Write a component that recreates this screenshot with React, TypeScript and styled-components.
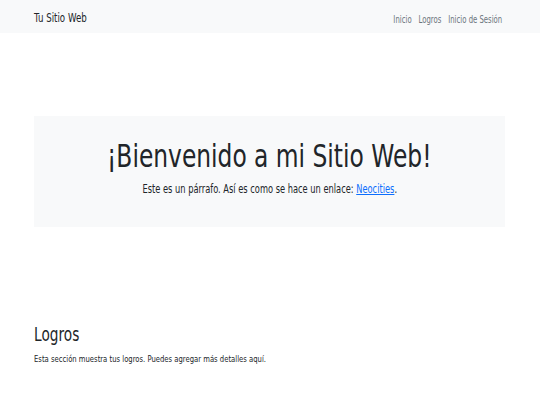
import * as React from 'react';
import styled, {createGlobalStyle} from 'styled-components';

// the reference renders DejaVu Sans squeezed horizontally, so text runs get a scaleX
const SQUEEZE = 0.72;

const Global = createGlobalStyle`
  html, body {
    margin: 0;
    padding: 0;
    background: #ffffff;
    font-family: "DejaVu Sans", sans-serif;
    color: #212529;
  }
`;

const Squeeze = styled.span<{$origin?: string; $scale?: number}>`
  display: inline-block;
  white-space: nowrap;
  transform: scaleX(${({$scale}) => $scale || SQUEEZE});
  transform-origin: ${({$origin}) => $origin || 'left'};
`;

const Navbar = styled.nav`
  height: 33px;
  background: #f8f9fa;
  display: flex;
  align-items: center;
  justify-content: space-between;
  padding: 0 38px 0 34px;
`;

const Brand = styled.a`
  font-size: 12px;
  line-height: 1;
  color: #212529;
  text-decoration: none;
  padding-top: 2px;
`;

const NavLinks = styled.ul`
  list-style: none;
  margin: 0;
  padding: 2px 0 0;
  display: flex;
  gap: 9.5px;
`;

const NavLink = styled.a`
  font-size: 9.6px;
  line-height: 1;
  color: #6c757d;
  text-decoration: none;
`;

const Container = styled.main`
  padding: 83px 35px 0 34px;
`;

const Jumbotron = styled.section`
  background: #f8f9fa;
  height: 111px;
  box-sizing: border-box;
  padding-top: 21px;
  display: flex;
  flex-direction: column;
  align-items: center;
`;

const Title = styled.h1`
  margin: 0;
  font-size: 32px;
  font-weight: 400;
  line-height: 1.2;
`;

const Lead = styled.p`
  margin: 6px 0 0;
  font-size: 11.5px;
  line-height: 1.5;
`;

const Link = styled.a`
  color: #0d6efd;
`;

const Section = styled.section`
  margin-top: 96px;
`;

const Heading = styled.h2`
  margin: 0 0 6px;
  font-size: 19px;
  font-weight: 400;
  line-height: 1.2;
`;

const Text = styled.p`
  margin: 0;
  font-size: 9.4px;
  line-height: 1.5;
`;

export default function App() {
  return (
    <>
      <Global />
      <Navbar>
        <Brand href="#">
          <Squeeze>Tu Sitio Web</Squeeze>
        </Brand>
        <Squeeze $origin="right">
          <NavLinks>
            <li><NavLink href="#">Inicio</NavLink></li>
            <li><NavLink href="#">Logros</NavLink></li>
            <li><NavLink href="#">Inicio de Sesión</NavLink></li>
          </NavLinks>
        </Squeeze>
      </Navbar>
      <Container>
        <Jumbotron>
          <Title>
            <Squeeze $origin="center" $scale={0.73}>¡Bienvenido a mi Sitio Web!</Squeeze>
          </Title>
          <Lead>
            <Squeeze $origin="center">
              Este es un párrafo. Así es como se hace un enlace: <Link href="#">Neocities</Link>.
            </Squeeze>
          </Lead>
        </Jumbotron>
        <Section>
          <Heading>
            <Squeeze>Logros</Squeeze>
          </Heading>
          <Text>
            <Squeeze $scale={0.73}>
              Esta sección muestra tus logros. Puedes agregar más detalles aquí.
            </Squeeze>
          </Text>
        </Section>
      </Container>
    </>
  );
}
